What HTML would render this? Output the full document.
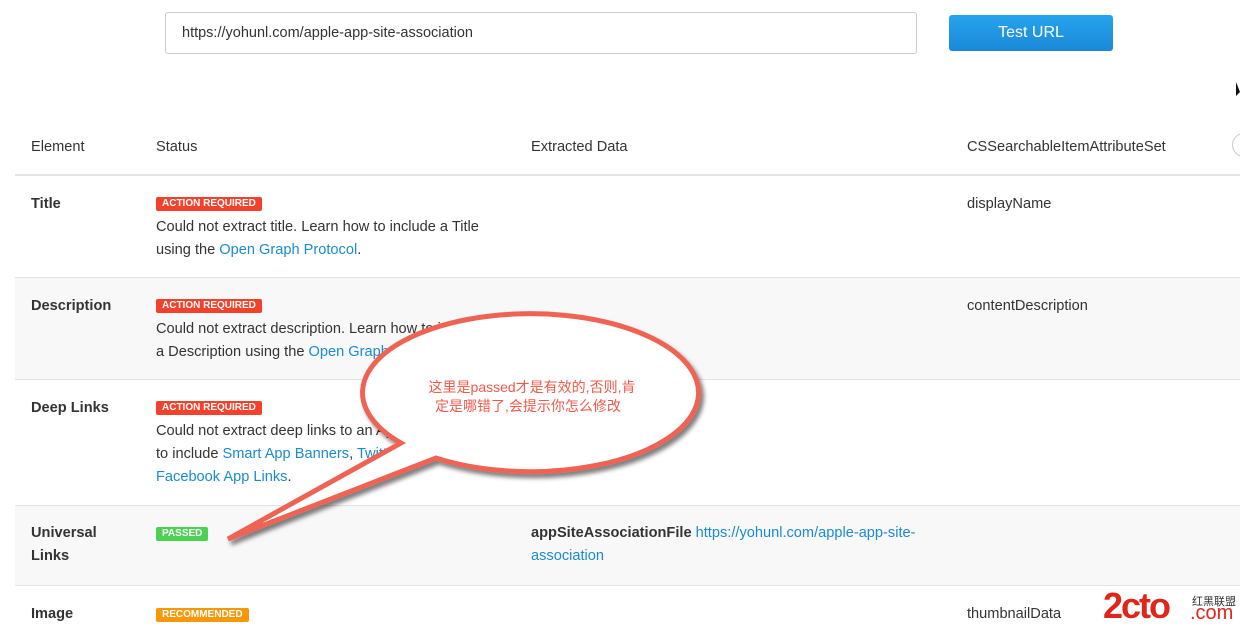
<!DOCTYPE html>
<html><head><meta charset="utf-8"><style>
*{margin:0;padding:0;box-sizing:border-box}
body{width:1240px;height:631px;overflow:hidden;background:#fff;font-family:"Liberation Sans","Noto Sans CJK SC",sans-serif;color:#333;font-size:14px;position:relative}
.abs{position:absolute}
.inp{left:165px;top:12px;width:752px;height:42px;border:1px solid #ccc;border-radius:3px;padding:12px 16px;font-size:14.5px;color:#333}
.btn{left:949px;top:15px;width:164px;height:36px;border-radius:3px;background:linear-gradient(#27a4ee,#1a88d8);color:#fff;font-size:16px;text-align:center;line-height:35px}
.row{position:absolute;left:15px;width:1225px;border-top:1px solid #e2e2e2}
.g{background:#f8f8f8}
.t{position:absolute;font-size:14.6px;line-height:23px;color:#333;margin-top:2px}
.b{font-weight:bold;color:#333}
a{color:#1a8ad2;text-decoration:none}
.badge{position:absolute;height:14px;font-size:10px;line-height:14px;color:#fff;padding:0 6px;border-radius:2px;font-weight:bold;margin-top:1px}
.r{background:#f4412b}.gr{background:#4cd153}.o{background:#f7980a}
</style></head><body>
<div class="abs inp">https://yohunl.com/apple-app-site-association</div>
<div class="abs btn">Test URL</div>
<div class="t" style="left:31px;top:134px">Element</div>
<div class="t" style="left:156px;top:134px">Status</div>
<div class="t" style="left:531px;top:134px">Extracted Data</div>
<div class="t" style="left:967px;top:134px">CSSearchableItemAttributeSet</div>
<div class="abs" style="left:1232px;top:133px;width:24px;height:24px;border:1px solid #ccc;border-radius:50%"></div>
<div class="row" style="top:174px;height:103px;border-top:2px solid #e4e4e4"></div>
<div class="row g" style="top:277px;height:102px"></div>
<div class="row" style="top:379px;height:126px"></div>
<div class="row g" style="top:505px;height:80px"></div>
<div class="row" style="top:585px;height:46px"></div>

<div class="t b" style="left:31px;top:191px">Title</div>
<div class="badge r" style="left:156px;top:196px">ACTION REQUIRED</div>
<div class="t" style="left:156px;top:214px">Could not extract title. Learn how to include a Title<br>using the <a>Open Graph Protocol</a>.</div>
<div class="t" style="left:967px;top:191px">displayName</div>

<div class="t b" style="left:31px;top:293px">Description</div>
<div class="badge r" style="left:156px;top:298px">ACTION REQUIRED</div>
<div class="t" style="left:156px;top:316px">Could not extract description. Learn how to include<br>a Description using the <a>Open Graph Protocol</a>.</div>
<div class="t" style="left:967px;top:293px">contentDescription</div>

<div class="t b" style="left:31px;top:395px">Deep Links</div>
<div class="badge r" style="left:156px;top:400px">ACTION REQUIRED</div>
<div class="t" style="left:156px;top:418px">Could not extract deep links to an App. Learn how<br>to include <a>Smart App Banners</a>, <a>Twitter Cards</a>, or<br><a>Facebook App Links</a>.</div>

<div class="t b" style="left:31px;top:520px">Universal<br>Links</div>
<div class="badge gr" style="left:156px;top:526px">PASSED</div>
<div class="t" style="left:531px;top:520px"><span class="b">appSiteAssociationFile</span> <a>https://yohunl.com/apple-app-site-</a><br><a>association</a></div>

<div class="t b" style="left:31px;top:601px">Image</div>
<div class="badge o" style="left:156px;top:607px">RECOMMENDED</div>
<div class="t" style="left:967px;top:601px">thumbnailData</div>

<svg class="abs" style="left:0;top:0" width="1240" height="631">
<defs><filter id="s"><feDropShadow dx="3" dy="4" stdDeviation="2" flood-color="#000" flood-opacity="0.5"/></filter></defs>
<path d="M401,443 A168,79 0 1,1 436,458 L228,539 Z" fill="#fff" stroke="#ef6355" stroke-width="5" stroke-linejoin="miter" filter="url(#s)"/>
<text x="532" y="392" font-size="14" fill="#ef5a4a" text-anchor="middle" font-family="Liberation Sans,Noto Sans CJK SC,sans-serif">这里是passed才是有效的,否则,肯</text>
<text x="528" y="411" font-size="14" fill="#ef5a4a" text-anchor="middle" font-family="Liberation Sans,Noto Sans CJK SC,sans-serif">定是哪错了,会提示你怎么修改</text>
<path d="M1236,82 L1236,96 L1240,92 Z" fill="#111"/>
</svg>
<div class="abs" style="left:1103px;top:586px;color:#e0251b;font-size:36px;font-weight:bold;letter-spacing:-2px;line-height:40px">2cto</div>
<div class="abs" style="left:1192px;top:593px;color:#333;font-size:11px">红黑联盟</div>
<div class="abs" style="left:1190px;top:602px;color:#e0251b;font-size:20px;line-height:22px">.com</div>
</body></html>
